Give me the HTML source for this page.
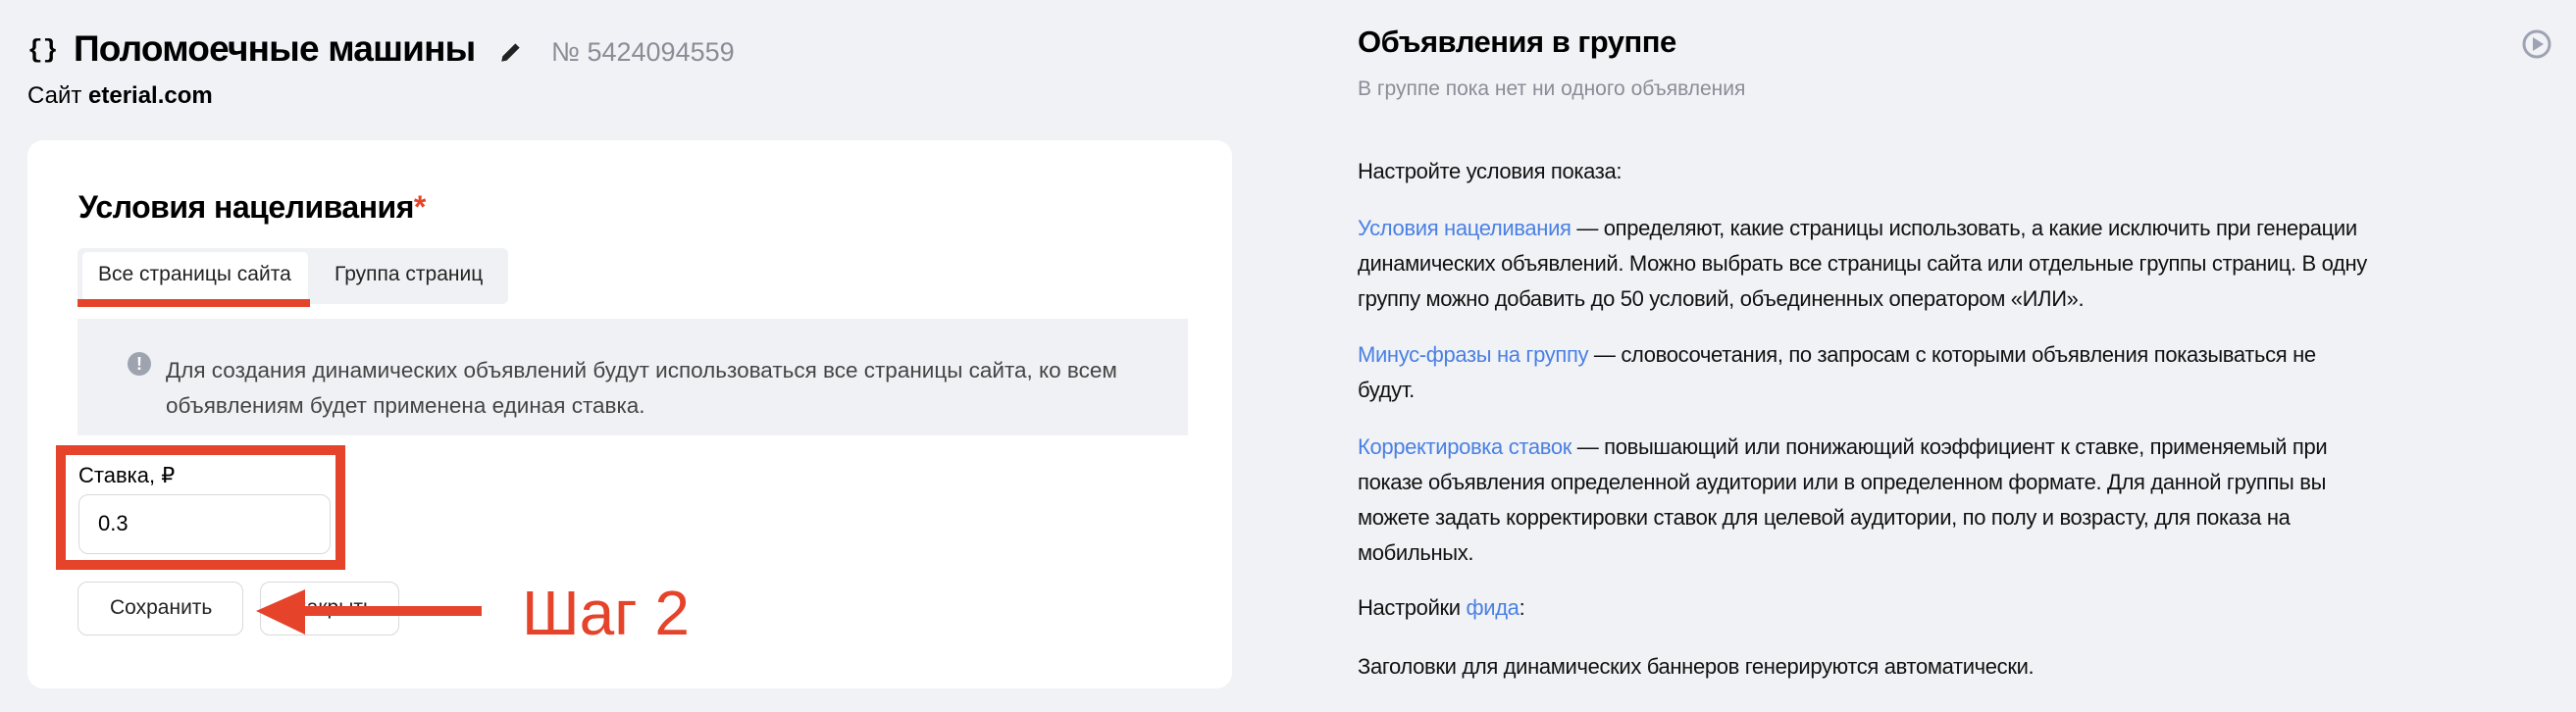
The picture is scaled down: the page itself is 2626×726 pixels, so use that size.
<!DOCTYPE html>
<html><head><meta charset="utf-8"><style>
*{margin:0;padding:0;box-sizing:border-box}
body{width:2626px;height:726px;background:#f1f2f6;font-family:"Liberation Sans","Noto Sans CJK SC",sans-serif;color:#000;position:relative;overflow:hidden}
.a{position:absolute;white-space:nowrap}
.card{position:absolute;left:28px;top:143px;width:1228px;height:559px;background:#fff;border-radius:16px}
.lnk{color:#4a80e3}
.p{font-size:22px;line-height:36px;color:#111;letter-spacing:-0.35px}
</style></head><body>
<div class="a" style="left:28px;top:36px;font-size:26px;font-weight:bold;font-family:'Liberation Mono',monospace">{}</div>
<div class="a" style="left:75px;top:29px;font-size:37px;font-weight:bold;letter-spacing:-0.8px">Поломоечные машины</div>
<svg class="a" style="left:508px;top:40px" width="26" height="26" viewBox="0 0 24 24"><path d="M3 21l1-5L16 4l4 4L8 20z" fill="#222"/></svg>
<div class="a" style="left:562px;top:38px;font-size:27px;color:#8a8d96">№ 5424094559</div>
<div class="a" style="left:28px;top:84px;font-size:24px">Сайт <b>eterial.com</b></div>

<div class="card"></div>
<div class="a" style="left:80px;top:193px;font-size:32px;font-weight:bold;letter-spacing:-0.5px">Условия нацеливания<span style="color:#e5432a">*</span></div>
<div class="a" style="left:79px;top:253px;width:439px;height:57px;background:#f0f1f4;border-radius:6px"></div>
<div class="a" style="left:84px;top:257px;width:230px;height:50px;background:#fff;border-radius:5px"></div>
<div class="a" style="left:100px;top:268px;font-size:21px;color:#222">Все страницы сайта</div>
<div class="a" style="left:341px;top:268px;font-size:21px;color:#222">Группа страниц</div>
<div class="a" style="left:79px;top:305px;width:237px;height:8px;background:#e5432a"></div>
<div class="a" style="left:79px;top:325px;width:1132px;height:119px;background:#f0f1f5"></div>
<div class="a" style="left:130px;top:359px;width:24px;height:24px;border-radius:50%;background:#9ea3b0;color:#fff;font-size:18px;font-weight:bold;text-align:center;line-height:24px">!</div>
<div class="a" style="left:169px;top:360px;font-size:22.5px;line-height:36px;color:#444">Для создания динамических объявлений будут использоваться все страницы сайта, ко всем<br>объявлениям будет применена единая ставка.</div>

<div class="a" style="left:57px;top:454px;width:295px;height:127px;border:10px solid #e5432a"></div>
<div class="a" style="left:80px;top:472px;font-size:22px">Ставка, ₽</div>
<div class="a" style="left:80px;top:504px;width:257px;height:61px;border:1px solid #d8d9de;border-radius:10px"></div>
<div class="a" style="left:100px;top:521px;font-size:22px">0.3</div>
<div class="a" style="left:79px;top:593px;width:169px;height:55px;border:1px solid #d8d9de;border-radius:10px"></div>
<div class="a" style="left:112px;top:608px;font-size:21px;color:#222">Сохранить</div>
<div class="a" style="left:265px;top:593px;width:142px;height:55px;border:1px solid #d8d9de;border-radius:10px"></div>
<div class="a" style="left:300px;top:608px;font-size:21px;color:#222">Закрыть</div>
<svg class="a" style="left:255px;top:595px" width="240" height="62"><rect x="48" y="23" width="188" height="10" fill="#e5432a"/><polygon points="6,28 56,6 56,52" fill="#e5432a"/></svg>
<div class="a" style="left:532px;top:588px;font-size:64px;color:#e5432a">Шаг 2</div>

<div class="a" style="left:1384px;top:25px;font-size:31px;font-weight:bold;letter-spacing:-0.5px">Объявления в группе</div>
<div class="a" style="left:1384px;top:79px;font-size:21px;color:#8a8d96">В группе пока нет ни одного объявления</div>
<svg class="a" style="left:2570px;top:29px" width="32" height="32" viewBox="0 0 32 32"><circle cx="16" cy="16" r="13" fill="none" stroke="#9ea3b4" stroke-width="3"/><polygon points="12,9 23,16 12,23" fill="#9ea3b4"/></svg>
<div class="a p" style="left:1384px;top:157px">Настройте условия показа:</div>
<div class="a p" style="left:1384px;top:215px"><span class="lnk">Условия нацеливания</span> — определяют, какие страницы использовать, а какие исключить при генерации<br>динамических объявлений. Можно выбрать все страницы сайта или отдельные группы страниц. В одну<br>группу можно добавить до 50 условий, объединенных оператором «ИЛИ».</div>
<div class="a p" style="left:1384px;top:344px"><span class="lnk">Минус-фразы на группу</span> — словосочетания, по запросам с которыми объявления показываться не<br>будут.</div>
<div class="a p" style="left:1384px;top:438px"><span class="lnk">Корректировка ставок</span> — повышающий или понижающий коэффициент к ставке, применяемый при<br>показе объявления определенной аудитории или в определенном формате. Для данной группы вы<br>можете задать корректировки ставок для целевой аудитории, по полу и возрасту, для показа на<br>мобильных.</div>
<div class="a p" style="left:1384px;top:602px">Настройки <span class="lnk">фида</span>:</div>
<div class="a p" style="left:1384px;top:662px">Заголовки для динамических баннеров генерируются автоматически.</div>
</body></html>
